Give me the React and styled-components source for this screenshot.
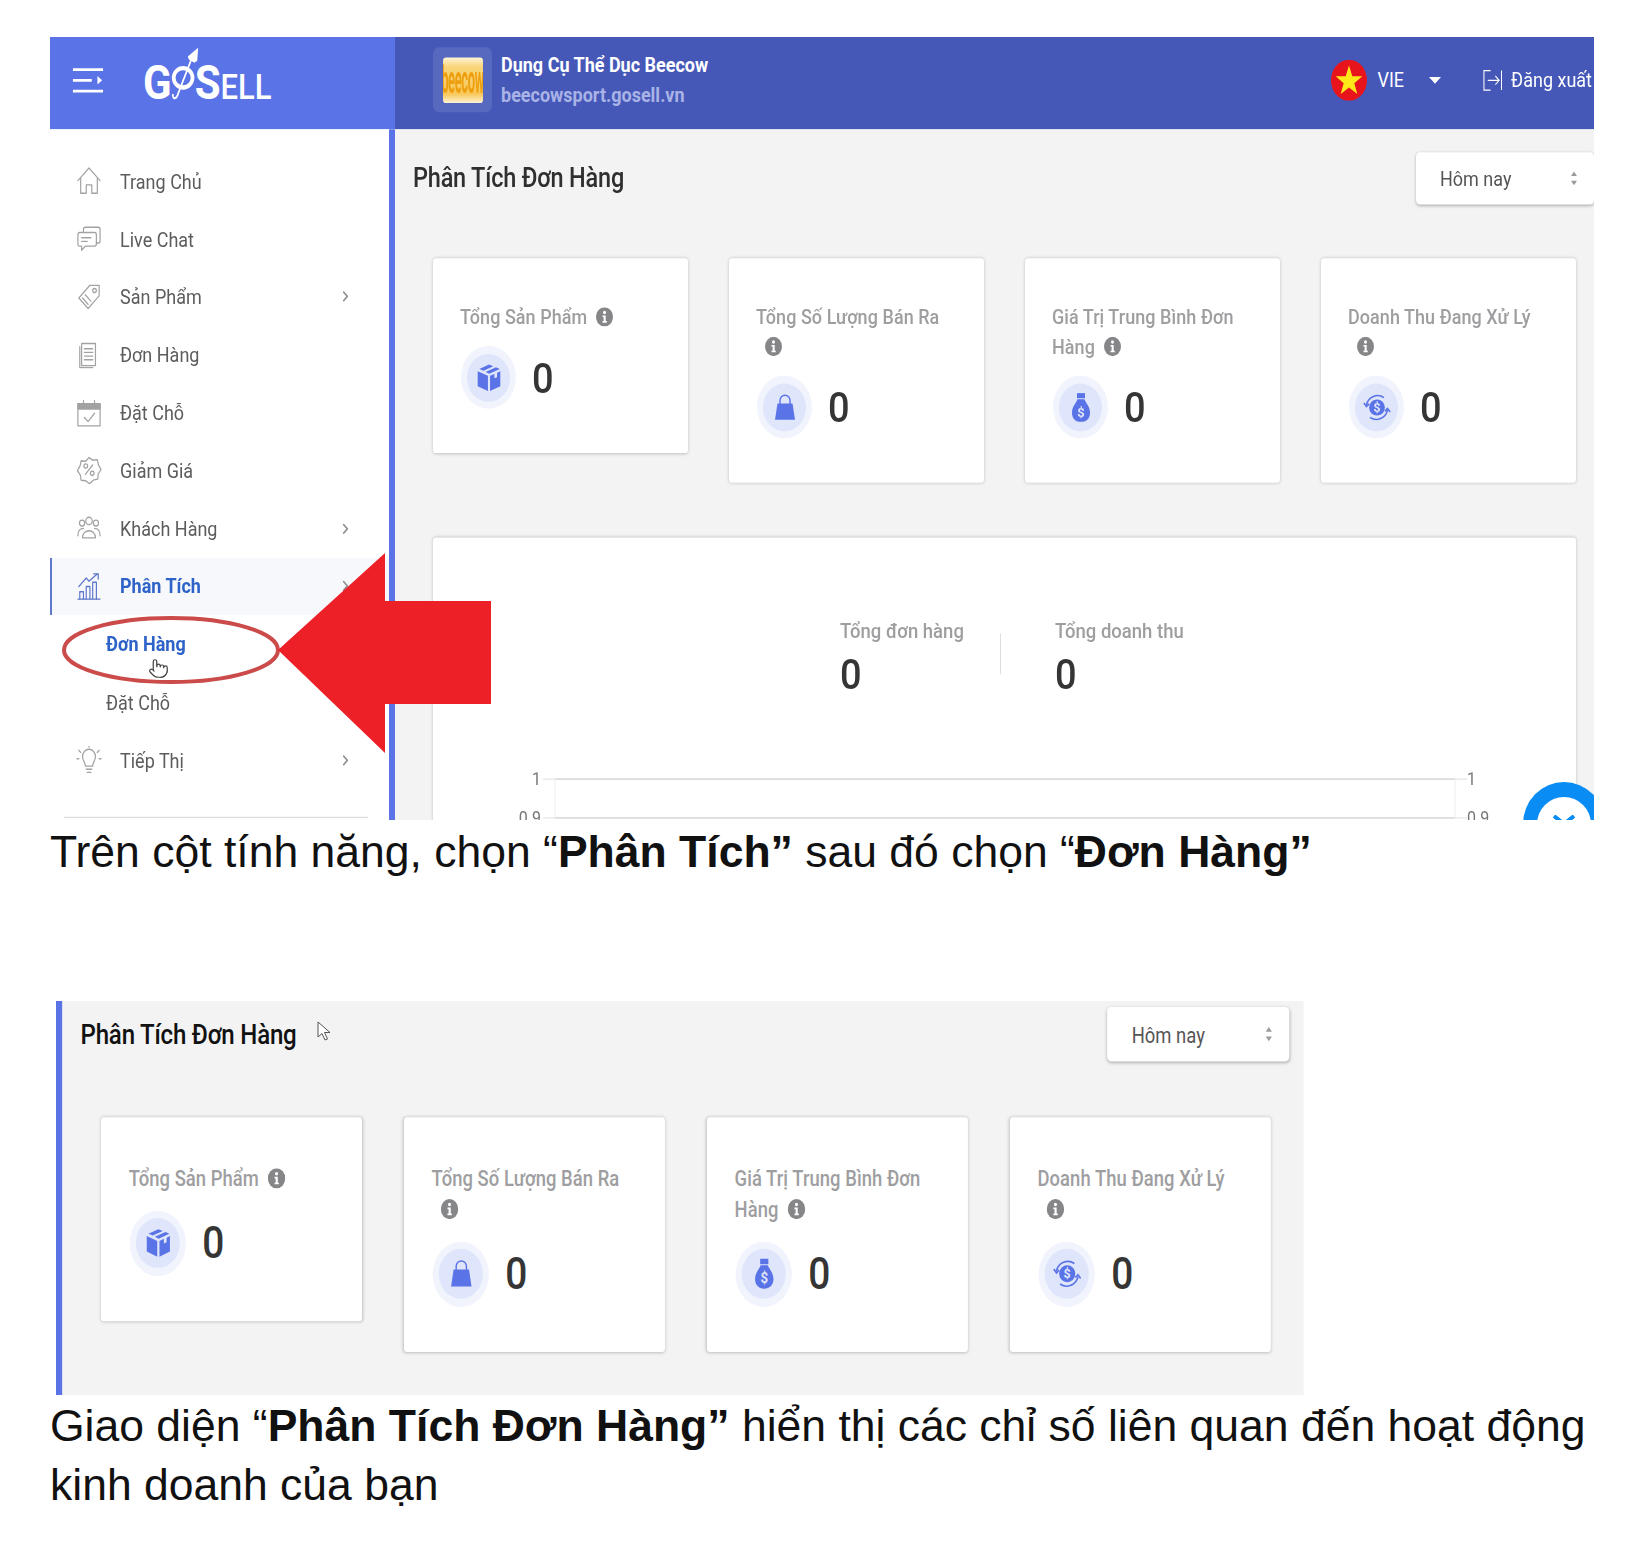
import React from 'react'
import styled, { createGlobalStyle } from 'styled-components'
import { ChevronRight, Pointer } from 'lucide-react'

const BLUE = '#5a73e6'
const DARK_BLUE = '#4558b8'

const GlobalStyle = createGlobalStyle`
html, body { margin: 0; padding: 0; background: #fff; }
body { font-family: Roboto, "Noto Sans", sans-serif; }
`

// sidebar line icons, 26 box
const Line = ({ children, active }) => (
    <svg width="26" height="24" viewBox="0 0 26 26" fill="none" stroke={active ? '#5f78c9' : '#a2a2a2'} strokeWidth="1.3" strokeLinejoin="round" strokeLinecap="round">
        {children}
    </svg>
)

const menuIcons = {
    home: <><path d="M1 13 13 1l12 12" /><path d="M4 11v14h6v-8h6v8h6V11" /></>,
    chat: <><path d="M7 6V4q0-2 2-2h14q2 0 2 2v11q0 2-2 2h-2" /><path d="M3 7h16q2 0 2 2v9q0 2-2 2H9l-4 4v-4H3q-2 0-2-2V9q0-2 2-2z" /><path d="M5 12h10M5 15.500h6" /></>,
    tag: <><path d="M24 2 14 2 2 14 l10 10 12-12z" /><circle cx="19" cy="7" r="2" /><path d="M6 14l6 6M9 11l6 6" /></>,
    doc: <><path d="M5 2h15v21H5z" /><path d="M3 5v20h14" /><path d="M8 7h9M8 10.500h9M8 14h9M8 17.500h9" /></>,
    cal: <><path d="M1 4h24v21H1z" /><path d="M1 4h24v5H1z" fill="#a2a2a2" /><path d="M7 1v4M19 1v4" /><path d="M8 17l4 4 7-8" /></>,
    sale: <><path d="M13 1l4 2.500 5-.500 1 4.500 3 5-3 4-.500 5-5 1-4 3.500-4-3-5-.500-1-5-3-4 3-5 1-4.500 5 .500z" /><path d="M9 17l8-9" /><circle cx="9.500" cy="9" r="2" /><circle cx="16.500" cy="16" r="2" /></>,
    users: <><circle cx="13" cy="6" r="3.500" /><circle cx="5.500" cy="8" r="2.800" /><circle cx="20.500" cy="8" r="2.800" /><path d="M6 22c0-9 14-9 14 0z" /><path d="M1 20c0-5 3-7 6-7M25 20c0-5-3-7-6-7" /></>,
    chart: <><path d="M1 25h24" /><path d="M3 25v-7h4v7M10 25V13h4v12M17 25V9h4v16" /><path d="M2 13 10 5l3 3 9-7" /><path d="M18 1h5v5" /></>,
    bulb: <><path d="M9 19c0-4-3-5-3-9a7 7 0 0 1 14 0c0 4-3 5-3 9z" /><path d="M10 22h6M11 25h4" /><path d="M13 0v1M2 4l2 2M24 4l-2 2M0 12h2M24 12h2" /></>,
}

const menu = [
    { label: 'Trang Chủ', icon: 'home' },
    { label: 'Live Chat', icon: 'chat' },
    { label: 'Sản Phẩm', icon: 'tag', more: true },
    { label: 'Đơn Hàng', icon: 'doc' },
    { label: 'Đặt Chỗ', icon: 'cal' },
    { label: 'Giảm Giá', icon: 'sale' },
    { label: 'Khách Hàng', icon: 'users', more: true },
    { label: 'Phân Tích', icon: 'chart', more: true, active: true },
    { label: 'Đơn Hàng', sub: true, active: true },
    { label: 'Đặt Chỗ', sub: true },
    { label: 'Tiếp Thị', icon: 'bulb', more: true },
]

const BoxIcon = () => (
    <svg width="28" height="30" viewBox="0 0 26 26" fill={BLUE}>
        <path d="M13 1l4 1.600-9 4L4 5z" />
        <path d="M19.500 3.500 23 5l-9.700 4.300L9.800 7.700z" />
        <path d="M2.500 7l9.500 4.200V25L2.500 20.500z" />
        <path d="M23.500 7v13.500L14 25V11.200l4-1.800v4l2.500-1v-4z" />
    </svg>
)

const BagIcon = () => (
    <svg width="26" height="28" viewBox="0 0 26 28" fill={BLUE}>
        <path d="M8 11V7a5 5 0 0 1 10 0v4" fill="none" stroke={BLUE} strokeWidth="1.400" />
        <path d="M5.500 10h15L23 26H3z" />
    </svg>
)

const MoneyIcon = () => (
    <svg width="26" height="30" viewBox="0 0 26 30" fill={BLUE}>
        <path d="M9 1h8v5H9z" />
        <path d="M9.500 7h7C18 11 22 14 22 20c0 6-4 9-9 9s-9-3-9-9c0-6 4-9 5.500-13z" />
        <text x="13" y="24" textAnchor="middle" fontSize="13" fontWeight="700" fill="#dfe5fa" fontFamily="Roboto, sans-serif">$</text>
    </svg>
)

const CycleIcon = () => (
    <svg width="28" height="30" viewBox="0 0 32 32" fill="none" stroke={BLUE} strokeWidth="1.800">
        <path d="M4 13A13 13 0 0 1 24 5" />
        <path d="M28 19A13 13 0 0 1 8 27" />
        <path d="M1 11l3 4 3-3M31 21l-3-4-3 3" />
        <circle cx="16" cy="16" r="9" fill={BLUE} stroke="none" />
        <text x="16" y="21" textAnchor="middle" fontSize="14" fontWeight="700" fill="#dfe5fa" stroke="none" fontFamily="Roboto, sans-serif">$</text>
    </svg>
)

const InfoIcon = () => (
    <InfoSvg width="17" height="17" viewBox="0 0 17 17">
        <circle cx="8.500" cy="8.500" r="8.500" fill="#868689" />
        <circle cx="8.500" cy="4.600" r="1.500" fill="#fff" />
        <path d="M6.500 7.200h3.200v5h1.100v1.400H6.500v-1.400h1.100V8.600H6.500z" fill="#fff" />
    </InfoSvg>
)

const stats = [
    { title: 'Tổng Sản Phẩm', icon: <BoxIcon /> },
    { title: 'Tổng Số Lượng Bán Ra', icon: <BagIcon /> },
    { title: 'Giá Trị Trung Bình Đơn Hàng', icon: <MoneyIcon /> },
    { title: 'Doanh Thu Đang Xử Lý', icon: <CycleIcon /> },
]

const AnalyticsHead = ({ dark, inset, top, valueGap }) => (
    <>
        <HeadRow $inset={inset} $top={top}>
            <PageTitle $dark={dark}>Phân Tích Đơn Hàng</PageTitle>
            <DateSelect>
                Hôm nay
                <svg width="8" height="14" viewBox="0 0 8 14" fill="#9a9a9a">
                    <path d="M4 1l3 4H1zM4 13 1 9h6z" />
                </svg>
            </DateSelect>
        </HeadRow>
        <StatRow>
            {stats.map((stat) => (
                <StatCard key={stat.title}>
                    <StatTitle>{stat.title}<InfoIcon /></StatTitle>
                    <StatValueRow $gap={valueGap}>
                        <IconRing><IconDisc>{stat.icon}</IconDisc></IconRing>
                        <StatValue>0</StatValue>
                    </StatValueRow>
                </StatCard>
            ))}
        </StatRow>
    </>
)

const App = () => {
    return (
        <Page>
            <GlobalStyle />

            <Shot $w={1544} $h={783}>
                <Scaled $w={1544} $sx={1} $sy={1.14}>
                    <TopBar>
                        <BrandBlock>
                            <svg width="32" height="24" viewBox="0 0 34 24" fill="none" stroke="#fff" strokeWidth="2.600">
                                <path d="M1 2h32M1 12h20M1 22h32" />
                                <path d="M27 8l5 4-5 4z" fill="#fff" stroke="none" />
                            </svg>
                            <Logo>
                                G
                                <svg width="32" height="50" viewBox="0 0 34 50" fill="none" stroke="#fff">
                                    <ellipse cx="15" cy="28" rx="10" ry="9" strokeWidth="4" />
                                    <path d="M25 8 10 42c-2 6-6 7-6 1" strokeWidth="1.800" />
                                    <path d="M31 0l-1 12-3 2-6-3-1-3z" fill="#fff" stroke="none" />
                                </svg>
                                S<LogoSmall>ELL</LogoSmall>
                            </Logo>
                        </BrandBlock>
                        <StoreBlock>
                            <StoreTile>
                                <StoreImage><StoreImageText>beecow</StoreImageText></StoreImage>
                            </StoreTile>
                            <StoreText>
                                <StoreName>Dụng Cụ Thể Dục Beecow</StoreName>
                                <StoreUrl>beecowsport.gosell.vn</StoreUrl>
                            </StoreText>
                            <TopActions>
                                <svg width="36" height="36" viewBox="0 0 36 36">
                                    <circle cx="18" cy="18" r="18" fill="#e8141c" />
                                    <path d="M18 5l3.300 9.500h10l-8 6 3 9.500-8.300-5.800L9.700 30l3-9.500-8-6h10z" fill="#ffe81a" />
                                </svg>
                                <LangLabel>VIE</LangLabel>
                                <Caret />
                                <LogoutLink>
                                    <svg width="19" height="20" viewBox="0 0 20 20" fill="none" stroke="#fff" strokeWidth="1.100">
                                        <path d="M8 1H1v18h7" />
                                        <path d="M5 10h12M13 6l4 4-4 4M19.500 1v18" />
                                    </svg>
                                    Đăng xuất
                                </LogoutLink>
                            </TopActions>
                        </StoreBlock>
                    </TopBar>

                    <Body>
                        <Sidebar>
                            <MenuList>
                                {menu.map((item) => (
                                    <MenuRow key={item.label + item.sub} $active={item.active && !item.sub} $sub={item.sub}>
                                        {item.icon && <Line active={item.active}>{menuIcons[item.icon]}</Line>}
                                        <MenuLabel $active={item.active}>{item.label}</MenuLabel>
                                        {item.more && <MoreIcon size={15} strokeWidth={2.4} />}
                                    </MenuRow>
                                ))}
                            </MenuList>
                            <SideDivider />
                        </Sidebar>

                        <Content>
                            <AnalyticsHead top={20} valueGap={12} />
                            <TotalsCard>
                                <TotalsRow>
                                    <TotalItem $first>
                                        <TotalLabel>Tổng đơn hàng</TotalLabel>
                                        <TotalValue>0</TotalValue>
                                    </TotalItem>
                                    <TotalItem>
                                        <TotalLabel>Tổng doanh thu</TotalLabel>
                                        <TotalValue>0</TotalValue>
                                    </TotalItem>
                                </TotalsRow>
                                <ChartSvg width="1143" height="60" viewBox="0 0 1143 60">
                                    <path d="M122 6h900M122 40h900" stroke="#dcdcdc" strokeWidth="1.500" />
                                    <path d="M122 6v34M1022 6v34" stroke="#ececec" />
                                    <path d="M110 6h12M110 40h12M1022 6h12M1022 40h12" stroke="#e6e6e6" />
                                    <text x="108" y="11" textAnchor="end" fontSize="16" fill="#777" fontFamily="Roboto, sans-serif">1</text>
                                    <text x="108" y="45" textAnchor="end" fontSize="16" fill="#777" fontFamily="Roboto, sans-serif">0.9</text>
                                    <text x="1034" y="11" fontSize="16" fill="#777" fontFamily="Roboto, sans-serif">1</text>
                                    <text x="1034" y="45" fontSize="16" fill="#777" fontFamily="Roboto, sans-serif">0.9</text>
                                </ChartSvg>
                            </TotalsCard>
                        </Content>
                    </Body>
                </Scaled>

                <ChatBubble>
                    <ChatHole>
                        <svg width="26" height="18" viewBox="0 0 26 18" fill="none" stroke="#0a8cf5" strokeWidth="4">
                            <path d="M3 1l20 16M23 1 3 17" />
                        </svg>
                    </ChatHole>
                </ChatBubble>

                <ArrowMark width="445" height="240" viewBox="0 0 445 240">
                    <ellipse cx="121" cy="117" rx="107" ry="32" fill="none" stroke="#cb4a4a" strokeWidth="4" />
                    <path d="M228 117 335 20v48h106v103H335v49z" fill="#ed2028" />
                </ArrowMark>
                <HandCursor size={21} strokeWidth={1.4} />
            </Shot>

            <Caption $top={2}>
                Trên cột tính năng, chọn “<b>Phân Tích”</b> sau đó chọn “<b>Đơn Hàng”</b>
            </Caption>

            <SecondShot $w={1248} $h={394}>
                <Scaled $w={1219} $sx={1.0235} $sy={1.186}>
                    <Content $bordered>
                        <AnalyticsHead dark inset={14} top={5} valueGap={13.5} />
                    </Content>
                </Scaled>
                <ArrowCursor width="14" height="20" viewBox="0 0 14 20">
                    <path d="M1 1v15l4-3.500 3 6.500 2.500-1-3-6.500h5.500z" fill="#fff" stroke="#555" strokeWidth="1" />
                </ArrowCursor>
            </SecondShot>

            <Caption $top={1}>
                Giao diện “<b>Phân Tích Đơn Hàng”</b> hiển thị các chỉ số liên quan đến hoạt động kinh doanh của bạn
            </Caption>
        </Page>
    )
}

export default App

const Page = styled.div`
width: 1652px;
height: 1546px;
box-sizing: border-box;
padding: 37px 0 0 50px;
overflow: hidden;
background: #fff;
`

const Shot = styled.div`
position: relative;
width: ${(p) => p.$w}px;
height: ${(p) => p.$h}px;
overflow: hidden;
`

const SecondShot = styled(Shot)`
margin: 120px 0 0 6px;
`

// the screenshots in the picture are stretched, so the whole thing gets scaled
const Scaled = styled.div`
width: ${(p) => p.$w}px;
transform: scale(${(p) => p.$sx}, ${(p) => p.$sy});
transform-origin: 0 0;
`

const TopBar = styled.header`
display: flex;
height: 81px;
color: #fff;
`

const BrandBlock = styled.div`
display: flex;
align-items: center;
gap: 39px;
width: 345px;
box-sizing: border-box;
padding: 0 0 6px 22px;
background: ${BLUE};
`

const Logo = styled.div`
display: flex;
align-items: baseline;
font-size: 42px;
font-weight: 700;
line-height: 1;
letter-spacing: -1px;
margin-top: 4px;

svg {
    margin: -14px -6px 0 -2px;
    align-self: center;
}
`

const LogoSmall = styled.span`
font-size: 31px;
font-weight: 500;
letter-spacing: 0;
margin-left: 1px;
`

const StoreBlock = styled.div`
flex: 1;
display: flex;
align-items: center;
padding: 0 0 6px 38px;
background: ${DARK_BLUE};
`

const StoreTile = styled.div`
display: flex;
align-items: center;
justify-content: center;
width: 59px;
height: 57px;
border-radius: 6px;
background: rgba(255, 255, 255, 0.1);
`

const StoreImage = styled.div`
display: flex;
align-items: center;
justify-content: center;
width: 40px;
height: 40px;
background: linear-gradient(#fff4d6, #f9d67a 20%, #f8c85a 80%, #fff4d6);
overflow: hidden;
border-radius: 3px;
`

const StoreImageText = styled.span`
font-size: 13px;
font-weight: 700;
letter-spacing: -0.4px;
color: #ee9f10;
transform: scaleY(2.6);
`

const StoreText = styled.div`
display: flex;
flex-direction: column;
gap: 6px;
margin-left: 9px;
`

const StoreName = styled.div`
font-size: 18px;
font-weight: 700;
line-height: 20px;
`

const StoreUrl = styled.div`
font-size: 18px;
font-weight: 700;
line-height: 20px;
color: #a9b3e6;
`

const TopActions = styled.div`
display: flex;
align-items: center;
margin-left: auto;
font-size: 18px;
`

const LangLabel = styled.span`
margin-left: 10px;
`

const Caret = styled.span`
margin: 0 42px 0 25px;
border-left: 6px solid transparent;
border-right: 6px solid transparent;
border-top: 6px solid #fff;
`

const LogoutLink = styled.span`
display: flex;
align-items: center;
gap: 9px;
padding-right: 2px;
`

const Body = styled.div`
display: flex;
height: 620px;
`

const Sidebar = styled.aside`
width: 345px;
box-sizing: border-box;
padding-top: 20px;
border-right: 6px solid ${BLUE};
background: #fff;
`

const MenuList = styled.div`
display: flex;
flex-direction: column;
`

const MenuRow = styled.div`
display: flex;
align-items: center;
gap: 18px;
height: 50.8px;
box-sizing: border-box;
padding-left: ${(p) => (p.$sub ? '56px' : p.$active ? '24px' : '26px')};
background: ${(p) => (p.$active ? '#f7f8fc' : 'transparent')};
border-left: ${(p) => (p.$active ? '2px solid #5f78c9' : 'none')};
`

const MenuLabel = styled.span`
font-size: 18px;
color: ${(p) => (p.$active ? '#2d63c8' : '#5c5c5c')};
font-weight: ${(p) => (p.$active ? 700 : 400)};
`

const MoreIcon = styled(ChevronRight)`
margin-left: auto;
margin-right: 36px;
color: #8e8e8e;
`

const SideDivider = styled.div`
height: 1px;
margin: 24px 21px 0 14px;
background: #d9d9d9;
`

const Content = styled.main`
flex: 1;
min-width: 0;
background: #f3f3f3;
border-left: ${(p) => (p.$bordered ? `6px solid ${BLUE}` : 'none')};
padding-bottom: ${(p) => (p.$bordered ? '100px' : '0')};
`

const HeadRow = styled.div`
display: flex;
justify-content: space-between;
align-items: flex-start;
padding: ${(p) => p.$top}px ${(p) => p.$inset || 0}px 0 18px;
`

const PageTitle = styled.h1`
margin: 0;
font-size: 23.5px;
font-weight: 500;
line-height: 46px;
color: ${(p) => (p.$dark ? '#111' : '#2f2f2f')};
letter-spacing: -0.2px;
`

const DateSelect = styled.div`
display: flex;
align-items: center;
justify-content: space-between;
width: 178px;
height: 46px;
box-sizing: border-box;
padding: 0 16px 0 24px;
background: #fff;
border-radius: 4px;
box-shadow: 0 1px 3px rgba(0, 0, 0, 0.28);
font-size: 18px;
color: #555;
`

const StatRow = styled.div`
display: flex;
align-items: flex-start;
gap: 41px;
margin-top: 46.5px;
padding-left: 38px;
`

const StatCard = styled.section`
width: 255px;
box-sizing: border-box;
padding: 39.5px 27px 38.5px;
background: #fff;
border-radius: 3px;
box-shadow: 0 0 3px rgba(0, 0, 0, 0.22);
`

const StatTitle = styled.div`
font-size: 18px;
font-weight: 500;
line-height: 26px;
letter-spacing: 0.05px;
color: #9e9ea1;
`

const InfoSvg = styled.svg`
display: inline-block;
vertical-align: -2px;
margin-left: 9px;
`

const StatValueRow = styled.div`
display: flex;
align-items: center;
gap: 16px;
margin-top: ${(p) => p.$gap}px;
`

const IconRing = styled.div`
display: flex;
align-items: center;
justify-content: center;
width: 55px;
height: 55px;
margin-left: 1px;
border-radius: 50%;
background: #f1f4fd;
`

const IconDisc = styled.div`
display: flex;
align-items: center;
justify-content: center;
width: 43px;
height: 42px;
border-radius: 50%;
background: #dfe5fa;

svg {
    transform: scaleY(0.9);
}
`

const StatValue = styled.div`
font-size: 38px;
font-weight: 500;
line-height: 1;
color: #353535;
`

const TotalsCard = styled.section`
width: 1143px;
height: 400px;
box-sizing: border-box;
margin: 48px 0 0 38px;
padding-top: 69px;
background: #fff;
border-radius: 3px;
box-shadow: 0 0 3px rgba(0, 0, 0, 0.22);
`

const TotalsRow = styled.div`
display: flex;
padding-left: 407px;
`

const TotalItem = styled.div`
width: ${(p) => (p.$first ? '161px' : 'auto')};
padding-left: ${(p) => (p.$first ? '0' : '54px')};
position: relative;

&::after {
    content: ${(p) => (p.$first ? '""' : 'none')};
    position: absolute;
    right: 0;
    top: 15px;
    height: 36px;
    width: 1px;
    background: #dedede;
}
`

const TotalLabel = styled.div`
font-size: 18.5px;
font-weight: 500;
line-height: 26px;
color: #9e9ea1;
`

const TotalValue = styled.div`
font-size: 38px;
font-weight: 500;
line-height: 50px;
color: #353535;
`

const ChartSvg = styled.svg`
display: block;
margin-top: 61px;
`

const ChatBubble = styled.div`
position: absolute;
left: 1473px;
top: 745px;
width: 82px;
height: 84px;
display: flex;
align-items: center;
justify-content: center;
border-radius: 50%;
background: #0a8cf5;
`

const ChatHole = styled.div`
display: flex;
align-items: flex-start;
justify-content: center;
padding-top: 18px;
box-sizing: border-box;
width: 54px;
height: 54px;
border-radius: 50%;
background: #fff;
`

const ArrowMark = styled.svg`
position: absolute;
left: 0;
top: 496px;
`

const HandCursor = styled(Pointer)`
position: absolute;
left: 98px;
top: 621px;
color: #444;
fill: #fff;
`

const ArrowCursor = styled.svg`
position: absolute;
left: 261px;
top: 20px;
`

const Caption = styled.p`
margin: ${(p) => p.$top}px 0 0;
width: 1560px;
font-family: "Liberation Sans", Arial, sans-serif;
font-size: 44.5px;
line-height: 59px;
color: #111;
`
